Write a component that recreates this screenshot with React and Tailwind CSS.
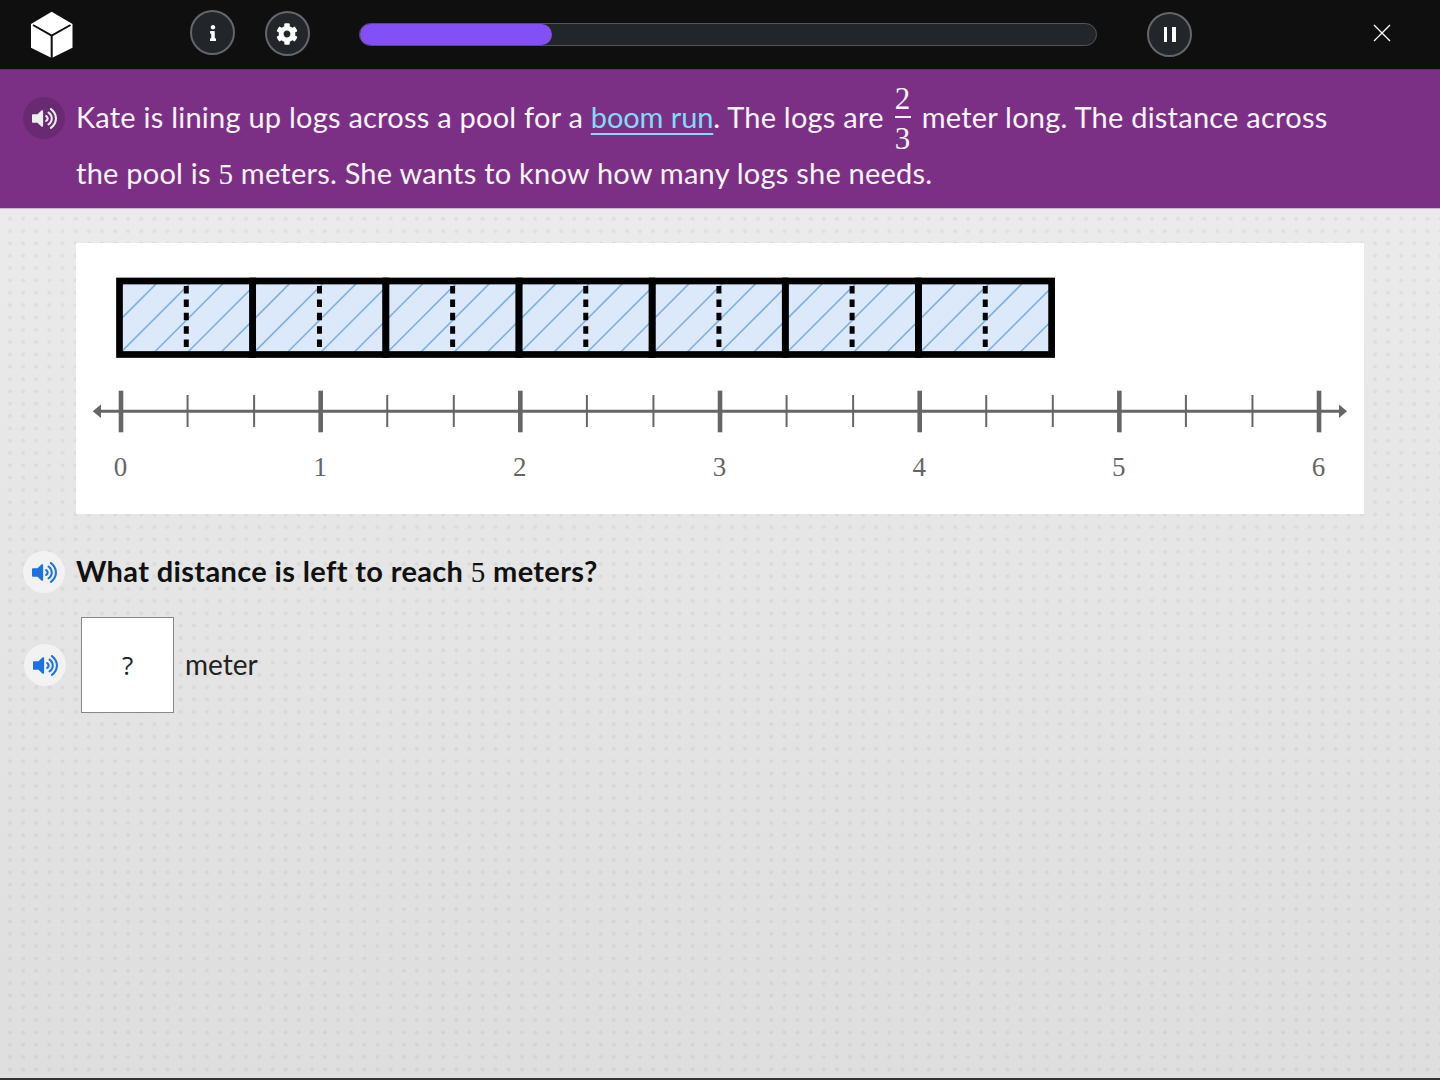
import React from 'react';
import { FaCog, FaInfo, FaVolumeUp } from 'react-icons/fa';

const bodyFont = "font-['Lato','Noto_Sans',sans-serif]";
const mathFont = "font-['Liberation_Serif',serif]";

const Logo = () => (
  <svg width="44" height="48" viewBox="30 11 44 48" className="shrink-0">
    <polygon points="51.7,11.7 72.5,24 72.5,47.7 51.7,58 31,47.7 31,24" fill="#fff" />
    <path d="M33 25 L51.7 35.5 L70.5 25 M51.7 35.5 V58" fill="none" stroke="#0f0f10" strokeWidth="2" />
  </svg>
);

const RoundButton = ({ className, children }) => (
  <div className={`w-[45px] h-[45px] shrink-0 rounded-full bg-[#22262b] border-2 border-[#666] flex items-center justify-center text-white ${className}`}>
    {children}
  </div>
);

const TopBar = () => (
  <div className="h-[70px] bg-[#0f0f10] border-b border-[#444] flex items-start pl-[30px]">
    <div className="mt-[11px]"><Logo /></div>
    <RoundButton className="ml-[116px] mt-[10px]"><FaInfo size={16} /></RoundButton>
    <RoundButton className="ml-[29.5px] mt-[11px]"><FaCog size={22} /></RoundButton>
    <div className="ml-[49.5px] mt-[23px] w-[738px] h-[23px] rounded-full bg-[#22262b] border border-[#555]">
      <div className="w-[192px] h-full rounded-full bg-[#8350f5]" />
    </div>
    <RoundButton className="ml-[50px] mt-[12px]">
      <div className="flex gap-[5px]">
        <div className="w-[3.5px] h-[15px] bg-white" />
        <div className="w-[3.5px] h-[15px] bg-white" />
      </div>
    </RoundButton>
    <svg width="18" height="18" viewBox="0 0 18 18" className="ml-[181px] mt-[24px]">
      <path d="M1 1 L17 17 M17 1 L1 17" stroke="#fff" strokeWidth="1.3" />
    </svg>
  </div>
);

const Fraction = () => (
  <div className={`${mathFont} mx-[11px] w-[16px] flex flex-col items-center text-[31px]`}>
    <span className="h-[38px] leading-[42px]">2</span>
    <div className="w-[16px] h-[2px] bg-[#f3e9f5]" />
    <span className="h-[38px] leading-[42px]">3</span>
  </div>
);

const Prompt = () => (
  <div className={`${bodyFont} h-[138px] bg-[#7c3085] text-[#fbf5fc] text-[29px] tracking-[0.23px] pt-[20px] pl-[23px] flex gap-[11px]`}>
    <div className="w-[42px] h-[42px] mt-[7px] rounded-full bg-[#6a2a73] text-[#eee] flex items-center justify-center">
      <FaVolumeUp size={25} />
    </div>
    <div>
      <div className="h-[54px] flex items-center whitespace-pre">
        <span>Kate is lining up logs across a pool for a </span>
        <span className="text-[#7fdcf8] tracking-[-0.1px] underline underline-offset-[5px] decoration-2">boom run</span>
        <span>. The logs are</span>
        <Fraction />
        <span>meter long. The distance across</span>
      </div>
      <div className="h-[60px] flex items-center whitespace-pre">
        <span>the pool is <span className={mathFont}>5</span> meters. She wants to know how many logs she needs.</span>
      </div>
    </div>
  </div>
);

const cellPitch = 133.16;
const tickPitch = 199.67 / 3;

const LogBar = () => {
  const cells = [0, 1, 2, 3, 4, 5, 6];
  // diagonal hatch lines, each one is x + y = sum
  const hatch = [];
  for (let i = -3; i < 30; i++) hatch.push(473.3 + i * 33.3);
  return (
    <g>
      <clipPath id="log-clip">
        <rect x="119.5" y="281" width="932" height="73.5" />
      </clipPath>
      <rect x="119.5" y="281" width="932" height="73.5" fill="#dbe9fb" />
      <g clipPath="url(#log-clip)">
        {hatch.map((sum) => (
          <line key={sum} x1={sum - 354} y1="354" x2={sum - 281} y2="281" stroke="#7fb0e0" strokeWidth="1.7" />
        ))}
      </g>
      {cells.map((i) => (
        <g key={i}>
          <line x1={186.3 + i * cellPitch} y1="286" x2={186.3 + i * cellPitch} y2="350" stroke="#000" strokeWidth="5" strokeDasharray="7.5 5.9" />
          <rect x={119.5 + i * cellPitch} y="281" width={cellPitch} height="73.5" fill="none" stroke="#000" strokeWidth="6.7" />
        </g>
      ))}
    </g>
  );
};

const NumberLine = () => {
  const ticks = [];
  for (let i = 0; i <= 18; i++) ticks.push(i);
  return (
    <g stroke="#666">
      <line x1="98" y1="411.3" x2="1342" y2="411.3" strokeWidth="3" />
      <polygon points="92.7,411.3 101,404.5 101,418" fill="#666" stroke="none" />
      <polygon points="1347,411.3 1339,404.5 1339,418" fill="#666" stroke="none" />
      {ticks.map((i) => {
        const x = 121 + i * tickPitch;
        return i % 3 === 0
          ? <line key={i} x1={x} y1="390.7" x2={x} y2="432.3" strokeWidth="4.6" />
          : <line key={i} x1={x} y1="395" x2={x} y2="427" strokeWidth="2" />;
      })}
      {[0, 1, 2, 3, 4, 5, 6].map((n) => (
        <text key={n} x={120.5 + n * 199.67} y="476" textAnchor="middle" fill="#666" stroke="none" fontSize="27" fontFamily="'Liberation Serif', serif">{n}</text>
      ))}
    </g>
  );
};

const Diagram = () => (
  <div className="mx-[76px] mt-[34px] h-[271px] bg-white">
    <svg width="1288" height="271" viewBox="76 243 1288 271" className="block">
      <LogBar />
      <NumberLine />
    </svg>
  </div>
);

const Speaker = () => (
  <div className="w-[42px] h-[42px] shrink-0 rounded-full bg-[#f2f2f2] text-[#1a73e0] flex items-center justify-center">
    <FaVolumeUp size={25} />
  </div>
);

export default function App() {
  return (
    <div className="w-[1440px] h-[1080px] overflow-hidden border-b-2 border-[#333] bg-[image:radial-gradient(circle,rgba(0,0,0,0.05)_1.3px,transparent_2.6px),linear-gradient(#eeeeee,#dedede)] bg-size-[13.13px_12.33px,100%_100%] bg-position-[3.44px_3.06px,0_0]">
      <TopBar />
      <Prompt />
      <div className="border-t border-[#cbb5cf]" />
      <Diagram />
      <div className={`${bodyFont} mt-[37px] pl-[23px] flex items-center gap-[11px] h-[42px] text-[29px] font-bold tracking-[0.35px] text-[#111]`}>
        <Speaker />
        <span>What distance is left to reach <span className={`${mathFont} font-normal`}>5</span> meters?</span>
      </div>
      <div className={`${bodyFont} mt-[24px] pl-[24px] flex items-start text-[28px] text-[#222]`}>
        <div className="mt-[27px]"><Speaker /></div>
        <div className="ml-[15px] w-[93px] h-[96px] bg-white border border-[#888] flex items-center justify-center font-['Open_Sans',sans-serif] text-[26px]">?</div>
        <span className="ml-[11px] mt-[26px]">meter</span>
      </div>
    </div>
  );
}
